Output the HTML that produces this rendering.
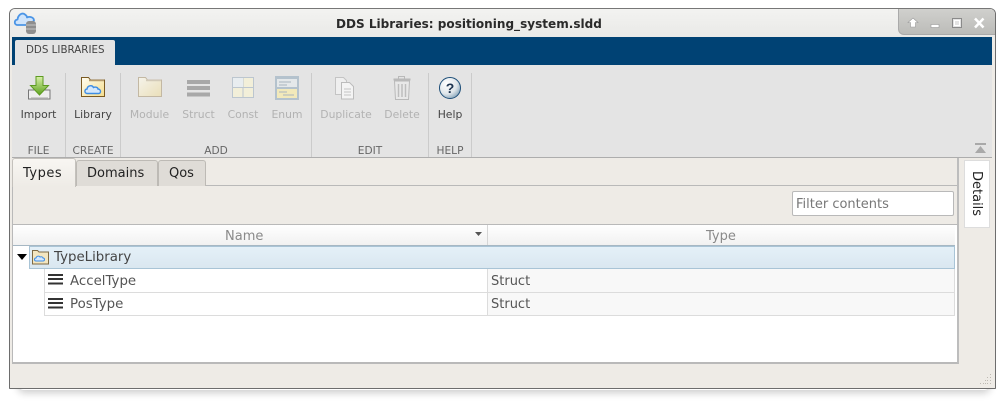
<!DOCTYPE html>
<html><head><meta charset="utf-8">
<style>
html,body{margin:0;padding:0;width:1005px;height:402px;overflow:hidden;background:#fff}
*{box-sizing:border-box}
body{font-family:"DejaVu Sans",sans-serif;position:relative}
.a{position:absolute}
.t{position:absolute;white-space:nowrap;line-height:14px}
.lb{font-size:10.8px;color:#444;transform:translateX(-50%);top:108px}
.dis{color:#b2b2b2}
.sec{font-size:10.6px;color:#666;transform:translateX(-50%);top:144px}
.sep{position:absolute;top:73px;width:1px;height:84px;background:#cbcbcb}
</style></head><body>
<!-- shadow -->
<div class="a" style="left:18px;top:14px;width:972px;height:376px;box-shadow:0 3px 8px rgba(0,0,0,.2);border-radius:6px"></div>
<!-- window -->
<div class="a" style="left:9px;top:8px;width:987px;height:381px;background:#eeebe6;border:1px solid #6d6d6d;border-top-color:#777;border-radius:6px 6px 1px 1px;overflow:hidden"></div>
<!-- title bar -->
<div class="a" style="left:10px;top:9px;width:985px;height:28px;background:linear-gradient(#f3f3f1,#e9e9e7);border-radius:5px 5px 0 0"></div>
<div class="a" style="left:898px;top:9px;width:97px;height:26px;background:linear-gradient(#d0d0cd,#bcbcb9);border-radius:0 5px 0 6px;border-left:1px solid #aaa;border-bottom:1px solid #aaa"></div>
<div class="t" style="left:336px;top:17px;font-size:12.05px;font-weight:bold;color:#2a2a2a">DDS Libraries: positioning_system.sldd</div>
<svg class="a" style="left:12px;top:10px" width="26" height="26" viewBox="0 0 26 26">
<path d="M5 15c-3-.5-3-5 .5-5.500C6 5 10 2 13 4.500c1.500 1 2 2 2 3 3-1.500 7 0 7 3l-4 4.500z" fill="#cfe4fb" stroke="#4b95e6" stroke-width="1.800" stroke-linejoin="round"/>
<rect x="14" y="11" width="10" height="13" rx="3" fill="#8e8e8e"/>
<path d="M14 15h10M14 19h10" stroke="#c5c5c5"/>
</svg>
<svg class="a" style="left:905px;top:15px" width="85" height="17" viewBox="0 0 85 17">
<path d="M8 3l5 4.500H10.500V12h-5V7.500H3z" fill="#fff" stroke="#999" stroke-width=".6"/>
<rect x="26" y="9.500" width="8" height="3" fill="#fff" stroke="#999" stroke-width=".6"/>
<rect x="47.500" y="3.500" width="9" height="9" fill="#e3e3e3" stroke="#8a8a8a" stroke-width="1"/>
<rect x="49.500" y="5.500" width="5" height="5" fill="none" stroke="#fff" stroke-width="1"/>
<path d="M70 3.500l8.500 9M78.500 3.500l-8.500 9" stroke="#fff" stroke-width="2.500"/>
</svg>
<!-- blue bar -->
<div class="a" style="left:12px;top:37px;width:980px;height:28px;background:#004274"></div>
<div class="a" style="left:15px;top:40px;width:100px;height:25px;background:#e4e4e4;border-radius:2px 2px 0 0"></div>
<div class="t" style="left:26px;top:43px;font-size:10.300px;color:#444">DDS LIBRARIES</div>
<!-- toolbar -->
<div class="a" style="left:12px;top:65px;width:980px;height:92px;background:#e4e4e4"></div>
<div class="a" style="left:12px;top:157px;width:980px;height:1px;background:#adadad"></div>
<div class="sep" style="left:65px"></div><div class="sep" style="left:120px"></div><div class="sep" style="left:311px"></div><div class="sep" style="left:428px"></div><div class="sep" style="left:471px"></div>
<svg class="a" style="left:0;top:65px" width="1005" height="90" viewBox="0 65 1005 90">
<defs>
<linearGradient id="gr" x1="0" y1="0" x2="0" y2="1"><stop offset="0" stop-color="#d8f0a8"/><stop offset="1" stop-color="#5ea41e"/></linearGradient>
<linearGradient id="fo" x1="0" y1="0" x2="1" y2="1"><stop offset="0" stop-color="#fffdf2"/><stop offset="1" stop-color="#f5dd8d"/></linearGradient>
<linearGradient id="fd" x1="0" y1="0" x2="1" y2="1"><stop offset="0" stop-color="#f5f3ea"/><stop offset="1" stop-color="#eadfb9"/></linearGradient>
<radialGradient id="he" cx=".35" cy=".3" r=".8"><stop offset="0" stop-color="#fff"/><stop offset=".6" stop-color="#dfe6ea"/><stop offset="1" stop-color="#7a9bb3"/></radialGradient>
</defs>
<!-- import -->
<path d="M28.500 90h21.500v9H28.500z" fill="#eee" stroke="#777"/>
<path d="M31 97.500h17v1.500H31z" fill="#aaa"/>
<path d="M36 76.500h7v9h5.500L39.500 95l-9-9.500H36z" fill="url(#gr)" stroke="#5d9a22" stroke-width="1"/>
<!-- library -->
<path d="M81.500 77.500h7l2 2.500h14v16.500h-23z" fill="url(#fo)" stroke="#7a5a22" stroke-width="1"/>
<path d="M89 80.500h15" stroke="#b59b6c" stroke-width="1.500"/>
<path d="M87 93.500c-3-.5-2.500-4.500 0-4.500 .5-3.500 5-4.500 6.500-1.500 2-1 4.500 0 4.500 1.500 3 0 3.500 4.500 .5 4.500z" fill="#d5e8fc" stroke="#3e8de4" stroke-width="1.400"/>
<!-- module -->
<path d="M138.500 77.500h7l2 2.500h14v16.500h-23z" fill="url(#fd)" stroke="#c3b8a3" stroke-width="1"/>
<path d="M146 80.500h15" stroke="#d2cab8" stroke-width="1.500"/>
<!-- struct -->
<path d="M187 80h23v4h-23zM187 86h23v4h-23zM187 92.500h23v4h-23z" fill="#a8a8a8"/>
<!-- const -->
<rect x="232.500" y="77.500" width="21" height="20" fill="#f2efd9" stroke="#bcc6cf"/>
<path d="M243 77.500v20M232.500 87.500h21" stroke="#bcc6cf"/>
<rect x="233" y="78" width="10" height="9" fill="#e8edf0"/>
<!-- enum -->
<rect x="275" y="76" width="24" height="24" fill="#b4c2cd"/>
<rect x="277" y="79" width="20" height="8" fill="#e4e8ea"/>
<rect x="277" y="89" width="20" height="9" fill="#f2e9ba"/>
<path d="M279 82h12M279 85h8M279 92h8M283 95h11" stroke="#a9b5bd" stroke-width="1"/>
<!-- duplicate -->
<path d="M335.500 77.500h8l3 3v14h-11z" fill="#efefef" stroke="#c4c4c4"/>
<path d="M341.500 82.500h8l4 4v12.500h-12z" fill="#f4f4f4" stroke="#bcbcbc"/>
<path d="M344 89h7M344 92h7M344 95h7" stroke="#c4c4c4"/>
<!-- delete -->
<path d="M393.500 79.500h17" stroke="#b9b9b9" stroke-width="2"/>
<rect x="398.500" y="76.500" width="6" height="3" fill="none" stroke="#b9b9b9"/>
<path d="M394.500 81h15l-1 18.500h-13z" fill="#e8e8e8" stroke="#b9b9b9"/>
<path d="M398.500 84v13M402 84v13M405.500 84v13" stroke="#bdbdbd" stroke-width="1.500"/>
<!-- help -->
<circle cx="450" cy="88" r="10.500" fill="url(#he)" stroke="#1d4e78" stroke-width="1"/>
<text x="450" y="93" font-family="'Liberation Sans',sans-serif" font-size="14" font-weight="bold" text-anchor="middle" fill="#1d3450">?</text>
<!-- collapse -->
<path d="M975 143h11v2h-11z" fill="#a9a9a9"/><path d="M980.500 146l5.500 7h-11z" fill="#a9a9a9"/>
</svg>
<div class="t lb" style="left:38.500px">Import</div>
<div class="t lb" style="left:93px">Library</div>
<div class="t lb dis" style="left:149.500px">Module</div>
<div class="t lb dis" style="left:198.500px">Struct</div>
<div class="t lb dis" style="left:243px">Const</div>
<div class="t lb dis" style="left:287px">Enum</div>
<div class="t lb dis" style="left:346px">Duplicate</div>
<div class="t lb dis" style="left:402px">Delete</div>
<div class="t lb" style="left:450px">Help</div>
<div class="t sec" style="left:38.500px">FILE</div>
<div class="t sec" style="left:93px">CREATE</div>
<div class="t sec" style="left:216px">ADD</div>
<div class="t sec" style="left:370px">EDIT</div>
<div class="t sec" style="left:450px">HELP</div>
<!-- tabs -->
<div class="a" style="left:12px;top:185px;width:946px;height:1px;background:#b9b9b9"></div>
<div class="a" style="left:12px;top:185px;width:1px;height:179px;background:#b9b9b9"></div>
<div class="a" style="left:957px;top:158px;width:2px;height:206px;background:#bdbdbd"></div>
<div class="a" style="left:76px;top:160px;width:82px;height:26px;background:#dfdcd7;border:1px solid #bdbab5;border-bottom:none;border-radius:3px 3px 0 0"></div>
<div class="a" style="left:158px;top:160px;width:48px;height:26px;background:#dfdcd7;border:1px solid #bdbab5;border-bottom:none;border-radius:3px 3px 0 0"></div>
<div class="a" style="left:12px;top:158px;width:64px;height:29px;background:linear-gradient(#f8f6f2,#eeebe6);border:1px solid #c4c1bc;border-bottom:none;border-radius:3px 3px 0 0"></div>
<div class="t" style="left:23px;top:167px;font-size:13px;letter-spacing:.5px;color:#222">Types</div>
<div class="t" style="left:87px;top:167px;font-size:13px;color:#222">Domains</div>
<div class="t" style="left:169px;top:167px;font-size:13px;color:#222">Qos</div>
<!-- filter -->
<div class="a" style="left:792px;top:191px;width:162px;height:25px;background:#fff;border:1px solid #b9b9b9;border-radius:2px"></div>
<div class="t" style="left:796px;top:198px;font-size:13px;color:#777">Filter contents</div>
<!-- details -->
<div class="a" style="left:964px;top:160px;width:26px;height:68px;background:#fff;border:1px solid #ddd"></div>
<div class="t" style="left:969px;top:171px;font-size:13px;color:#222;writing-mode:vertical-rl">Details</div>
<!-- table -->
<div class="a" style="left:12px;top:224px;width:947px;height:140px;background:#fff;border:1px solid #b9b9b9;border-width:1px 2px 2px 1px;border-right-color:#bdbdbd;border-bottom-color:#b9b9b9"></div>
<div class="a" style="left:13px;top:225px;width:942px;height:20px;background:linear-gradient(#fff,#f1f1f1)"></div>
<div class="a" style="left:487px;top:225px;width:1px;height:20px;background:#d6d6d6"></div>
<div class="t" style="left:225px;top:230px;font-size:13px;color:#8a8a8a">Name</div>
<div class="t" style="left:706px;top:230px;font-size:13px;color:#8a8a8a">Type</div>
<svg class="a" style="left:474px;top:231px" width="9" height="6"><path d="M1 1h7L4.500 5z" fill="#555"/></svg>
<div class="a" style="left:29px;top:246px;width:926px;height:23px;background:linear-gradient(#e4f0f8,#dae7f0);border:1px solid #a9c4d6"></div>
<div class="a" style="left:13px;top:245px;width:942px;height:1px;background:#a6b7c3"></div>
<svg class="a" style="left:17px;top:254px" width="10" height="7"><path d="M0 0h10L5 6z" fill="#000"/></svg>
<svg class="a" style="left:32px;top:250px" width="17" height="15" viewBox="0 0 17 15">
<path d="M.5.5h5l1.500 1.500h9.500v12H.5z" fill="#f3e6c0" stroke="#7d6a45"/>
<path d="M4 11c-2 0-2-3 0-3 .5-2 3-2.500 4-1 1.500-.5 3 0 3 1 2 0 2 3 0 3z" fill="#d5e8fc" stroke="#3e8de4"/>
</svg>
<div class="t" style="left:54px;top:251px;font-size:13.35px;color:#444">TypeLibrary</div>
<div class="a" style="left:44px;top:269px;width:911px;height:47px;background:#fff;border:1px solid #dcdcdc;border-top:none"></div>
<div class="a" style="left:488px;top:269px;width:466px;height:46px;background:#f8f8f8"></div>
<div class="a" style="left:45px;top:292px;width:909px;height:1px;background:#dcdcdc"></div>
<div class="a" style="left:487px;top:269px;width:1px;height:46px;background:#dcdcdc"></div>
<svg class="a" style="left:48px;top:274px" width="15" height="36"><path d="M0 0h15v2H0zM0 4h15v2H0zM0 8.500h15v2H0zM0 24h15v2H0zM0 28h15v2H0zM0 32.500h15v2H0z" fill="#333"/></svg>
<div class="t" style="left:70px;top:275px;font-size:13.35px;color:#555">AccelType</div>
<div class="t" style="left:70px;top:298px;font-size:13.35px;color:#555">PosType</div>
<div class="t" style="left:491px;top:275px;font-size:13px;color:#555">Struct</div>
<div class="t" style="left:491px;top:298px;font-size:13px;color:#555">Struct</div>
<!-- grip -->
<svg class="a" style="left:979px;top:373px" width="13" height="12"><path d="M11 1h1v1h-1zM8 4h1v1H8zM11 4h1v1h-1zM6 7h1v1H6zM8 7h1v1H8zM11 7h1v1h-1zM1 10h1v1H1zM4 10h1v1H4zM6 10h1v1H6zM8 10h1v1H8zM11 10h1v1h-1z" fill="#bdb9b2"/></svg>
</body></html>
